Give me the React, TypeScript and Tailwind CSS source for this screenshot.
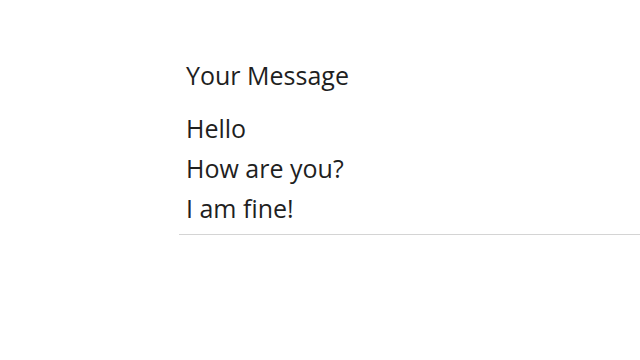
import React from 'react';

const App: React.FC = () => {
  const lines = ['Hello', 'How are you?', 'I am fine!'];

  return (
    <div className="w-[640px] h-[360px] bg-white flex" style={{ fontFamily: '"Open Sans", "Noto Sans", sans-serif' }}>
      <div className="ml-[179px] flex-1 pt-[58px]">
        <div className="border-b border-[#d4d4d4] pl-[7px] pb-[6px] text-[#1f1f1f]">
          <h2 className="text-[25px] leading-[34px] font-normal">Your Message</h2>
          <div className="mt-[16px] flex flex-col">
            {lines.map((line) => (
              <p key={line} className="text-[25px] leading-[40px]">{line}</p>
            ))}
          </div>
        </div>
      </div>
    </div>
  );
};

export default App;
